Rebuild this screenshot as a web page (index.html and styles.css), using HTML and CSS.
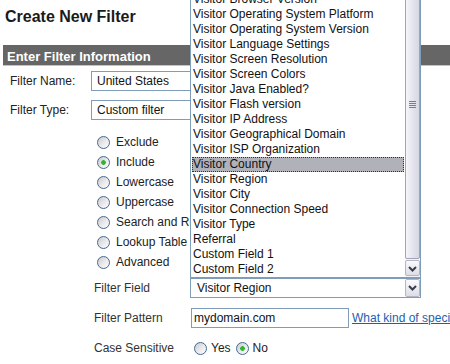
FILE: index.html
```html
<!DOCTYPE html>
<html lang="en">
  <head>
    <meta charset="UTF-8" />
    <title>Create New Filter</title>
    <link rel="stylesheet" href="styles.css">
  </head>
  <body>
    <h1 class="title">Create New Filter</h1>

    <div class="panel">
      <div class="panel-head">Enter Filter Information</div>

      <div class="row">
        <label class="row-label">Filter Name:</label>
        <input class="text-input wide" type="text" value="United States" />
      </div>
      <div class="row">
        <label class="row-label">Filter Type:</label>
        <div class="text-input wide">Custom filter</div>
      </div>

      <!-- filter type options -->
      <ul class="type-list">
        <li><input class="radio" type="radio" name="ftype" /> Exclude</li>
        <li><input class="radio" type="radio" name="ftype" checked /> Include</li>
        <li><input class="radio" type="radio" name="ftype" /> Lowercase</li>
        <li><input class="radio" type="radio" name="ftype" /> Uppercase</li>
        <li><input class="radio" type="radio" name="ftype" /> Search and Replace</li>
        <li><input class="radio" type="radio" name="ftype" /> Lookup Table</li>
        <li><input class="radio" type="radio" name="ftype" /> Advanced</li>
      </ul>

      <div class="fields">
        <div class="field-row">
          <span class="field-label">Filter Field</span>
          <div class="select">
            Visitor Region
            <span class="arrow-btn">
              <svg width="15" height="16" viewBox="0 0 15 16"><polyline points="4,6 7.5,9.5 11,6" fill="none" stroke="#3c3d4c" stroke-width="2" /></svg>
            </span>
          </div>
        </div>
        <div class="field-row">
          <span class="field-label">Filter Pattern</span>
          <input class="text-input pattern" type="text" value="mydomain.com" />
          <a class="help-link" href="#">What kind of special characters can I use?</a>
        </div>
        <div class="field-row">
          <span class="field-label">Case Sensitive</span>
          <label class="case-opt"><input class="radio" type="radio" name="case" />Yes</label>
          <label class="case-opt"><input class="radio" type="radio" name="case" checked />No</label>
        </div>
      </div>
    </div>

    <!-- open dropdown of the Filter Field select -->
    <div class="dropdown">
      <ul class="dropdown-list">
        <li>Visitor Browser Version</li>
        <li>Visitor Operating System Platform</li>
        <li>Visitor Operating System Version</li>
        <li>Visitor Language Settings</li>
        <li>Visitor Screen Resolution</li>
        <li>Visitor Screen Colors</li>
        <li>Visitor Java Enabled?</li>
        <li>Visitor Flash version</li>
        <li>Visitor IP Address</li>
        <li>Visitor Geographical Domain</li>
        <li>Visitor ISP Organization</li>
        <li class="is-selected">Visitor Country</li>
        <li>Visitor Region</li>
        <li>Visitor City</li>
        <li>Visitor Connection Speed</li>
        <li>Visitor Type</li>
        <li>Referral</li>
        <li>Custom Field 1</li>
        <li>Custom Field 2</li>
      </ul>
      <div class="scrollbar">
        <div class="thumb"><span class="grip"></span></div>
        <span class="arrow-btn scroll-down">
          <svg width="15" height="16" viewBox="0 0 15 16"><polyline points="4,6 7.5,9.5 11,6" fill="none" stroke="#3c3d4c" stroke-width="2" /></svg>
        </span>
      </div>
    </div>
  </body>
</html>
```

FILE: styles.css
```css
body {
  margin: 0;
  height: 364px;
  overflow: hidden;
  position: relative;
  font-family: "Liberation Sans", Arial, sans-serif;
  font-size: 12px;
  color: #222;
  background: #fff;
}

.title {
  margin: 0;
  padding: 8px 5px 0;
  font-size: 16px;
  line-height: 18px;
  color: #1a1a1a;
}

.panel {
  margin-top: 19px;
}

.panel-head {
  margin-left: 3px;
  padding-left: 4px;
  height: 20px;
  line-height: 23px;
  overflow: hidden;
  background: #666;
  color: #fff;
  font-size: 13px;
  font-weight: bold;
  border-bottom: 1px solid #b9c5d3;
}

.row {
  display: flex;
  align-items: center;
  height: 29px;
  padding-left: 10px;
}

.row-label {
  flex: none;
  width: 81px;
}

.text-input {
  flex: none;
  box-sizing: border-box;
  height: 20px;
  margin: 0;
  border: 1px solid #7f9db9;
  padding: 0 5px;
  font-family: inherit;
  font-size: 12px;
  line-height: 18px;
  color: #111;
  background: #fff;
}

.wide {
  width: 230px;
}

.type-list {
  list-style: none;
  margin: 8px 0 0;
  padding: 0 0 0 97px;
}

.type-list li {
  display: flex;
  align-items: center;
  gap: 6px;
  height: 20px;
  white-space: nowrap;
}

.radio {
  flex: none;
  appearance: none;
  -webkit-appearance: none;
  box-sizing: border-box;
  width: 13px;
  height: 13px;
  margin: 0;
  border: 1px solid #45698f;
  border-radius: 50%;
  background: linear-gradient(135deg, #c9cacf 0%, #ebebee 55%, #fdfdfd 100%);
}

.radio:checked {
  background: radial-gradient(circle, #2fb52f 0, #2fb52f 2px, transparent 2.6px),
    linear-gradient(135deg, #c9cacf 0%, #ebebee 55%, #fdfdfd 100%);
}

.fields {
  margin-top: 1px;
}

.field-row {
  display: flex;
  align-items: center;
  height: 30px;
  padding-left: 94px;
  white-space: nowrap;
}

.field-label {
  flex: none;
  width: 96px;
  color: #333;
}

.select {
  flex: none;
  position: relative;
  box-sizing: border-box;
  width: 231px;
  height: 20px;
  border: 1px solid #7f9db9;
  padding-left: 6px;
  line-height: 18px;
  color: #111;
}

.arrow-btn {
  position: absolute;
  right: 0;
  top: 0;
  box-sizing: border-box;
  width: 15px;
  height: 18px;
  border: 1px solid #b4b6c6;
  border-radius: 2px;
  background: linear-gradient(#fbfbfd, #dcdde6);
}

.arrow-btn svg {
  display: block;
  margin: 0 0 0 -1px;
}

.pattern {
  width: 158px;
  margin-left: 1px;
  padding: 0 2px;
}

.help-link {
  flex: none;
  margin-left: 3px;
  color: #1c5fb0;
}

.case-opt {
  display: flex;
  align-items: center;
  gap: 4px;
  margin: 0 5px 0 4px;
}

.case-opt + .case-opt {
  margin-left: 0;
}

/* open dropdown */
.dropdown {
  position: absolute;
  left: 190px;
  top: -9px;
  box-sizing: border-box;
  width: 231px;
  height: 287px;
  border: 1px solid #7f9db9;
  background: #fff;
  overflow: hidden;
}

.dropdown-list {
  list-style: none;
  margin: 0;
  padding: 0;
  width: 214px;
}

.dropdown-list li {
  height: 15px;
  line-height: 15px;
  padding-left: 2px;
  white-space: nowrap;
  color: #111;
}

.dropdown-list .is-selected {
  margin: 0 1px;
  padding-left: 1px;
  background: #b0b1b9;
  outline: 1px dotted #333;
  outline-offset: -1px;
}

.scrollbar {
  position: absolute;
  top: 0;
  right: 0;
  bottom: 0;
  width: 15px;
  background: #f3f3f6;
}

.thumb {
  position: absolute;
  left: 0;
  right: 0;
  top: -43px;
  height: 310px;
  box-sizing: border-box;
  border: 1px solid #a2a4b6;
  border-radius: 2px;
  background: linear-gradient(to right, #f6f6f9, #e4e5ee 50%, #d5d7e2);
}

.grip {
  position: absolute;
  left: 3px;
  top: 151px;
  width: 7px;
  height: 8px;
  background: repeating-linear-gradient(#7a7c92 0, #7a7c92 1px, transparent 1px, transparent 2px);
}

.scroll-down {
  top: auto;
  bottom: 1px;
  height: 16px;
}
```
